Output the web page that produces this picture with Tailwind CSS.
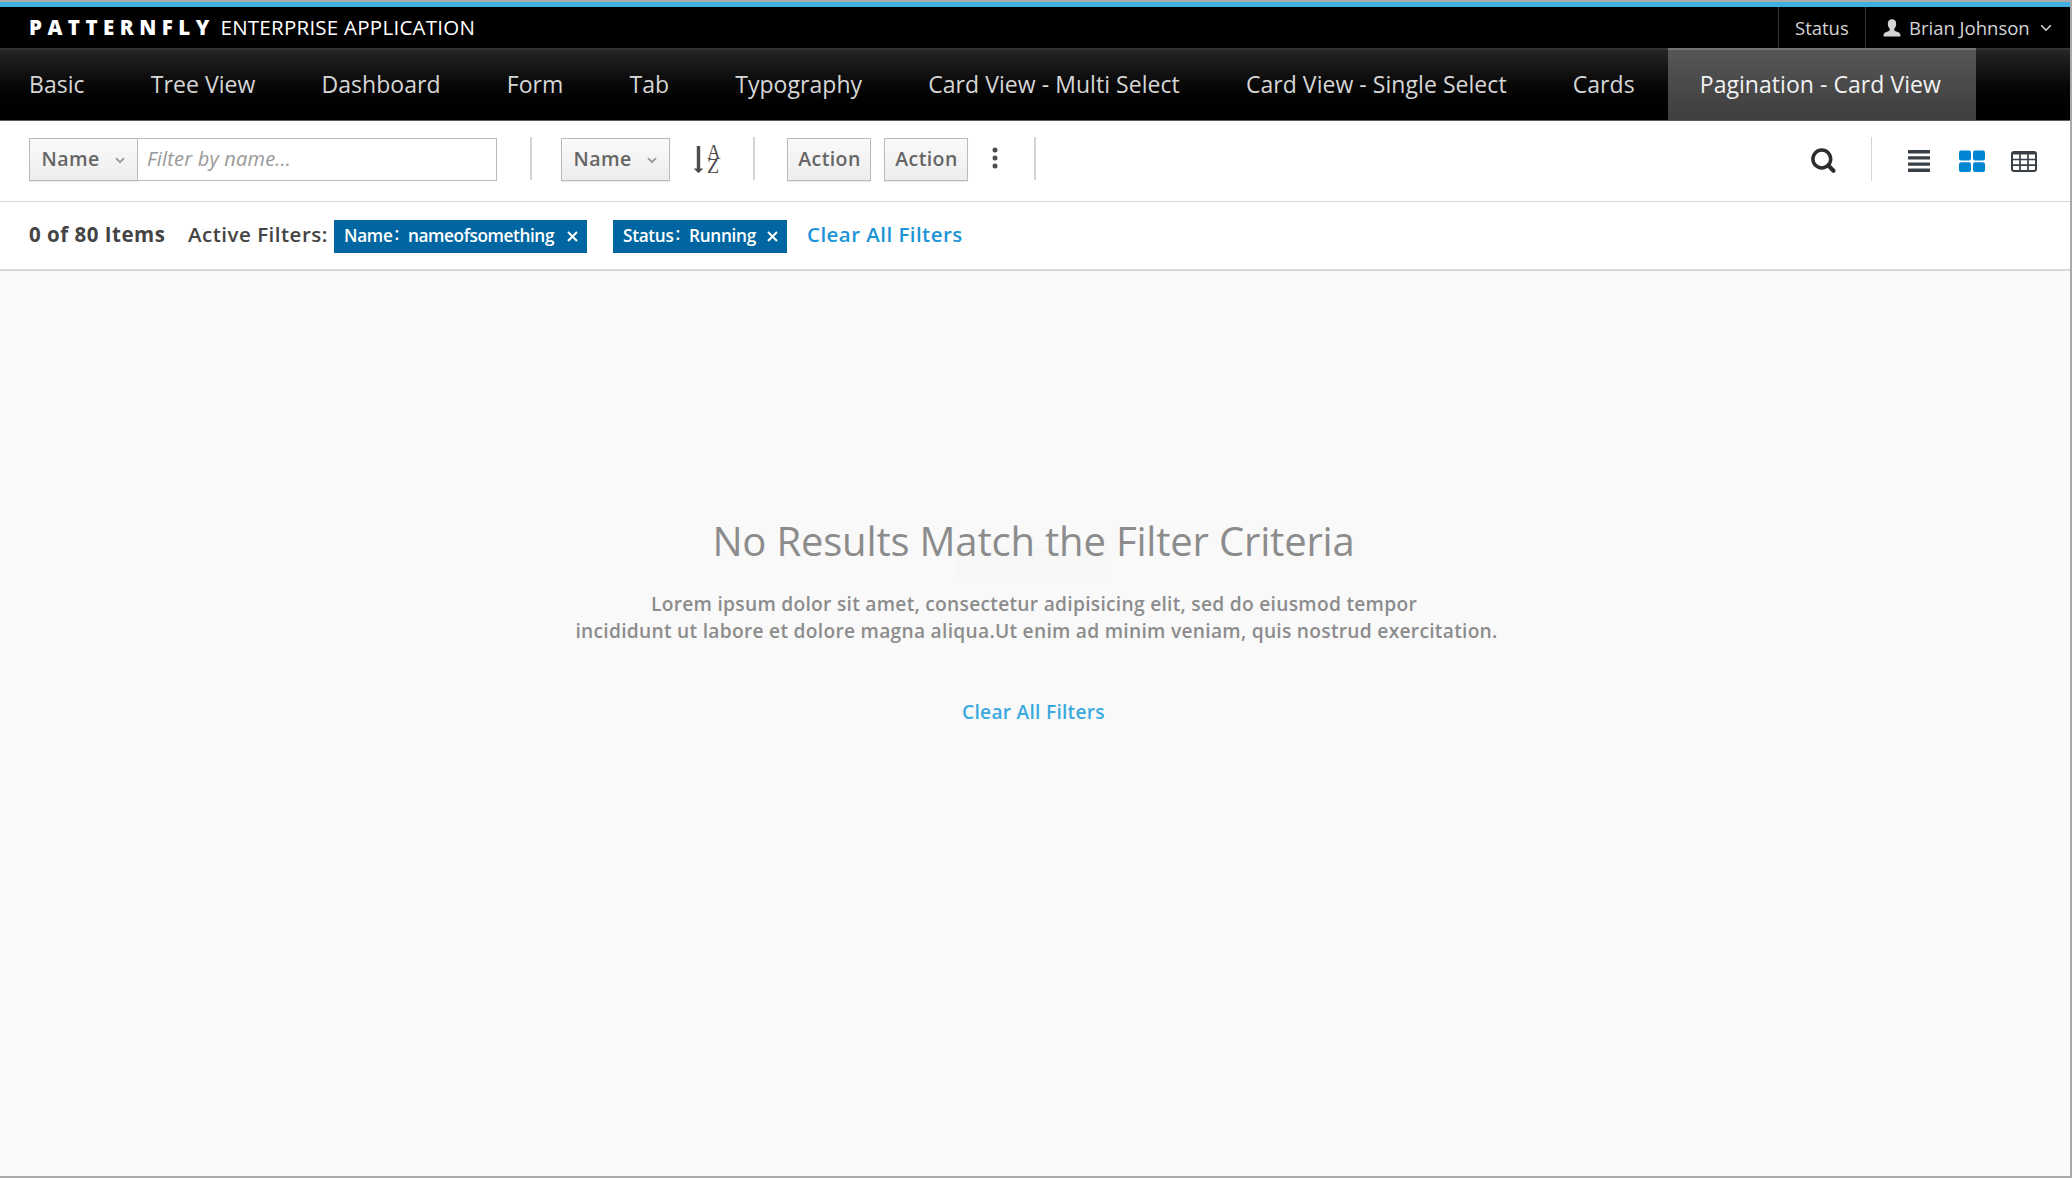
<!DOCTYPE html>
<html lang="en">
<head>
<meta charset="utf-8">
<title>Patternfly Enterprise Application</title>
<script src="https://cdn.jsdelivr.net/npm/@tailwindcss/browser@4"></script>
</head>
<body class="font-['Open_Sans',sans-serif] bg-[#f9f9f9]">
<div class="flex h-[1178px] w-[2072px] flex-col overflow-hidden border-r-2 border-b-2 border-[#a9a9a9]">
  <div class="h-[2px] shrink-0 bg-[#aaaaaa]"></div>
  <div class="h-[5px] shrink-0 bg-[#41b1e3]"></div>

  <header class="flex h-[41px] shrink-0 items-center bg-black pl-[29px] whitespace-nowrap">
    <span class="w-[191.500px] text-[20.5px] leading-[41px] font-extrabold tracking-[5.5px] text-white">PATTERNFLY</span>
    <span class="text-[20.5px] leading-[41px] tracking-[0.25px] text-white">ENTERPRISE APPLICATION</span>
    <div class="ml-auto flex h-full text-[18.5px] leading-[41px] text-[#d4d4d4]">
      <div class="w-[87px] border-l border-[#383838] pl-[16px]">Status</div>
      <div class="flex w-[205px] items-center border-l border-[#383838] pl-[17px]">
        <svg class="mt-px h-[18px] w-[18px]" viewBox="0 0 18 18" fill="#d4d4d4"><path d="M9 0.3c2.7 0 4.3 1.9 4.2 4.7-.1 2.300-.9 3.700-1.900 4.700-.3 1 .1 1.900.9 2.300l3.600 1.500c1.300.6 1.700 2 1.700 4H.5c0-2 .4-3.400 1.700-4l3.600-1.500c.8-.4 1.200-1.300.9-2.300-1-1-1.800-2.400-1.900-4.700C4.700 2.200 6.300.3 9 .3z"/></svg>
        <span class="ml-[8px]">Brian Johnson</span>
        <svg class="ml-[10px] h-[8px] w-[12px]" viewBox="0 0 12 8" fill="none" stroke="#d4d4d4" stroke-width="1.6"><path d="M1.200 1.200L6 6.200L10.800 1.200"/></svg>
      </div>
    </div>
  </header>

  <nav class="flex h-[73px] shrink-0 border-t-2 border-b border-t-[#323232] border-b-[#5e5e5e] bg-black bg-linear-to-b from-[#262626] to-black text-[23px] leading-[68px] tracking-[0.05px] whitespace-nowrap text-[#d6d6d6]">
    <a class="pr-[33.05px] pl-[29px]">Basic</a>
    <a class="px-[33.05px]">Tree View</a>
    <a class="px-[33.05px]">Dashboard</a>
    <a class="px-[33.05px]">Form</a>
    <a class="px-[33.05px]">Tab</a>
    <a class="px-[33.05px]">Typography</a>
    <a class="px-[33.05px]">Card View - Multi Select</a>
    <a class="px-[33.05px]">Card View - Single Select</a>
    <a class="px-[33.05px]">Cards</a>
    <a class="-mt-[2px] h-[72px] w-[308px] border-t-2 border-[#737373] bg-linear-to-b from-[#565656] to-[#3e3e3e] pl-[32px] text-[#f2f2f2]">Pagination - Card View</a>
  </nav>

  <section class="flex h-[81px] shrink-0 items-start border-b border-[#d8d8d8] bg-white pt-[17px] pl-[29px] text-[19.5px] leading-[40px] font-semibold tracking-[0.4px] text-[#666666]">
    <button class="flex h-[43px] w-[109px] border border-[#bbbbbb] bg-linear-to-b from-[#fafafa] to-[#ededed] pl-[11.5px] shadow-[0_1px_1px_rgba(0,0,0,0.08)]">
      <span class="w-[73px] text-left">Name</span>
      <svg class="mt-[18px] h-[7px] w-[10px]" viewBox="0 0 10 7" fill="none" stroke="#999999" stroke-width="1.900"><path d="M1 1.200L5 5.200L9 1.200"/></svg>
    </button>
    <div class="-ml-px h-[43px] w-[360px] border border-[#bbbbbb] bg-white pl-[9px] text-[20px] font-normal tracking-[0.2px] text-[#999999] italic">Filter by name...</div>
    <div class="-mt-px ml-[33px] h-[43px] w-[2px] bg-[#d5d5d5]"></div>
    <button class="ml-[29px] flex h-[43px] w-[109px] border border-[#bbbbbb] bg-linear-to-b from-[#fafafa] to-[#ededed] pl-[11.5px] shadow-[0_1px_1px_rgba(0,0,0,0.08)]">
      <span class="w-[73px] text-left">Name</span>
      <svg class="mt-[18px] h-[7px] w-[10px]" viewBox="0 0 10 7" fill="none" stroke="#999999" stroke-width="1.900"><path d="M1 1.200L5 5.200L9 1.200"/></svg>
    </button>
    <svg class="mt-[5px] ml-[22px] h-[32px] w-[32px] overflow-visible" viewBox="0 0 32 32" fill="#4d4d4d"><path d="M4.800 3h3.400v22.500h3.100L6.500 30.300L1.700 25.500h3.100z"/><text x="15" y="15.500" font-family="Liberation Serif, serif" font-size="20" font-weight="400" textLength="14" lengthAdjust="spacingAndGlyphs">A</text><text x="15" y="30" font-family="Liberation Serif, serif" font-size="20.500" font-weight="400" textLength="12.500" lengthAdjust="spacingAndGlyphs">Z</text></svg>
    <div class="-mt-px ml-[29px] h-[43px] w-[2px] bg-[#d5d5d5]"></div>
    <button class="ml-[32px] h-[43px] w-[84px] border border-[#bbbbbb] bg-linear-to-b from-[#fafafa] to-[#ededed] pb-[1px] pl-[1px] shadow-[0_1px_1px_rgba(0,0,0,0.08)]">Action</button>
    <button class="ml-[13px] h-[43px] w-[84px] border border-[#bbbbbb] bg-linear-to-b from-[#fafafa] to-[#ededed] pb-[1px] pl-[1px] shadow-[0_1px_1px_rgba(0,0,0,0.08)]">Action</button>
    <svg class="mt-[9px] ml-[24px] h-[22px] w-[6px]" viewBox="0 0 6 22" fill="#4d4d4d"><circle cx="3" cy="3" r="2.500"/><circle cx="3" cy="11" r="2.500"/><circle cx="3" cy="19" r="2.500"/></svg>
    <div class="-mt-px ml-[36px] h-[43px] w-[2px] bg-[#d5d5d5]"></div>

    <svg class="mt-[9px] ml-auto h-[28px] w-[28px]" viewBox="0 0 28 28" fill="none" stroke="#2d2d2d"><circle cx="11.800" cy="12" r="8.900" stroke-width="3.500"/><path d="M18.300 18.500L23.500 23.700" stroke-width="4.200" stroke-linecap="round"/></svg>
    <div class="-mt-px ml-[33px] h-[44px] w-px bg-[#d5d5d5]"></div>
    <svg class="mt-[12px] ml-[36px] h-[22px] w-[22px]" viewBox="0 0 22 22" fill="#393f46"><rect width="22" height="3.400" rx=".5"/><rect y="6.200" width="22" height="3.400" rx=".5"/><rect y="12.400" width="22" height="3.400" rx=".5"/><rect y="18.600" width="22" height="3.400" rx=".5"/></svg>
    <svg class="mt-[12px] ml-[29px] h-[22px] w-[26px]" viewBox="0 0 26 22" fill="#0086d3"><rect y=".5" width="12" height="10" rx="2"/><rect x="14" y=".5" width="12" height="10" rx="2"/><rect y="12.200" width="12" height="9.800" rx="2"/><rect x="14" y="12.200" width="12" height="9.800" rx="2"/></svg>
    <svg class="mt-[12px] mr-[33px] ml-[26px] h-[22px] w-[26px]" viewBox="0 0 26 22" fill="none" stroke="#393f46"><rect x="1" y="2" width="24" height="19" rx="2" stroke-width="2"/><path d="M2 3.200H24" stroke-width="2.500"/><path d="M1.500 9.500H24.500M1.500 15.200H24.500M9 4V21M17 4V21" stroke-width="1.700"/></svg>
  </section>

  <section class="flex h-[69px] shrink-0 items-start border-b-2 border-[#d8d8d8] bg-white pl-[29px] text-[20.5px] leading-[65px] font-semibold tracking-[0.5px] whitespace-nowrap text-[#444444]">
    <span class="w-[159px] font-bold">0 of 80 Items</span>
    <span class="w-[146px]">Active Filters:</span>
    <div class="mt-[18px] flex h-[33px] w-[253px] bg-[#0066a1] pl-[10px] text-[17.2px] leading-[32px] font-semibold tracking-[-0.3px] text-white">
      <span class="w-[64px]">Name<span class="relative -top-[2px] ml-[2px]">:</span></span>
      <span class="w-[159px] tracking-[-0.4px]">nameofsomething</span>
      <svg class="mt-[11px] h-[11px] w-[11px]" viewBox="0 0 11 11" stroke="#fff" stroke-width="2"><path d="M1 1L10 10M10 1L1 10"/></svg>
    </div>
    <div class="mt-[18px] ml-[26px] flex h-[33px] w-[174px] bg-[#0066a1] pl-[10px] text-[17.2px] leading-[32px] font-semibold tracking-[-0.3px] text-white">
      <span class="w-[66px]">Status<span class="relative -top-[2px] ml-[2px]">:</span></span>
      <span class="w-[78px]">Running</span>
      <svg class="mt-[11px] h-[11px] w-[11px]" viewBox="0 0 11 11" stroke="#fff" stroke-width="2"><path d="M1 1L10 10M10 1L1 10"/></svg>
    </div>
    <a class="ml-[20px] tracking-[0.45px] text-[#1b95d6]">Clear All Filters</a>
  </section>

  <main class="relative flex flex-1 flex-col items-center bg-[#f9f9f9] pt-[240px] text-center whitespace-nowrap text-[#8c8c8c]">
    <div class="absolute top-[276px] left-[957px] h-[31px] w-[154px] bg-[#f7f7f7]"></div>
    <h1 class="relative mr-[3px] text-[40px] leading-[60px] tracking-[-0.18px]">No Results Match the Filter Criteria</h1>
    <p class="relative mt-[19px] mr-[2px] text-[19.2px] leading-[27px] font-semibold tracking-[0.28px]">Lorem ipsum dolor sit amet, consectetur adipisicing elit, sed do eiusmod tempor<br><span class="ml-[5px]">incididunt ut labore et dolore magna aliqua.Ut enim ad minim veniam, quis nostrud exercitation.</span></p>
    <a class="mt-[54px] mr-[3px] text-[19.2px] leading-[28px] font-semibold tracking-[0.25px] text-[#3ba9df]">Clear All Filters</a>
  </main>
</div>
</body>
</html>
